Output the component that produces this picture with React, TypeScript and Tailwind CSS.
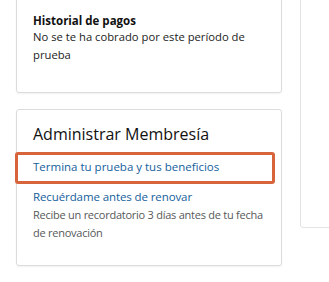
import React from 'react';

const font = { fontFamily: '"Open Sans", "Noto Sans", Arial, sans-serif' };

export default function App() {
  return (
    <div className="w-[329px] h-[282px] overflow-hidden bg-white" style={font}>
      <div className="flex items-start pl-4 -mt-[10px]">
        <div className="w-[266px] shrink-0 flex flex-col gap-4">
          <div className="border border-[#dcdcdc] rounded-[3px] pt-[22px] pb-[28px] px-[16px] shadow-[0_1px_2px_rgba(0,0,0,0.06)]">
            <h3 className="text-[11.5px] leading-[15px] font-bold text-[#111]">Historial de pagos</h3>
            <p className="text-[11.25px] leading-[18px] text-[#222]">
              No se te ha cobrado por este período de prueba
            </p>
          </div>

          <div className="border border-[#dcdcdc] rounded-[3px] pt-[12px] pb-[23px] pl-[16px] pr-[8px] shadow-[0_1px_2px_rgba(0,0,0,0.06)]">
            <h2 className="text-[16px] leading-[24px] text-[#111] mb-[6px]">Administrar Membresía</h2>
            <div className="relative pt-[6px] pb-[8px]">
              <a className="block text-[11.5px] leading-[18px] text-[#15609c]">Termina tu prueba y tus beneficios</a>
              <div className="absolute -left-[18px] right-[-2px] top-0 bottom-0 border-[3px] border-[#d8643c] rounded-[3px]" />
            </div>
            <div className="mt-[4px]">
              <a className="block text-[11.5px] leading-[18px] text-[#15609c] tracking-[-0.1px]">Recuérdame antes de renovar</a>
              <p className="text-[11px] leading-[18px] text-[#565959] tracking-[-0.25px]">
                Recibe un recordatorio 3 días antes de tu fecha de renovación
              </p>
            </div>
          </div>
        </div>
        <div className="ml-[18px] w-[60px] h-[238px] border border-[#e3e3e3] rounded-[3px] shrink-0" />
      </div>
    </div>
  );
}
